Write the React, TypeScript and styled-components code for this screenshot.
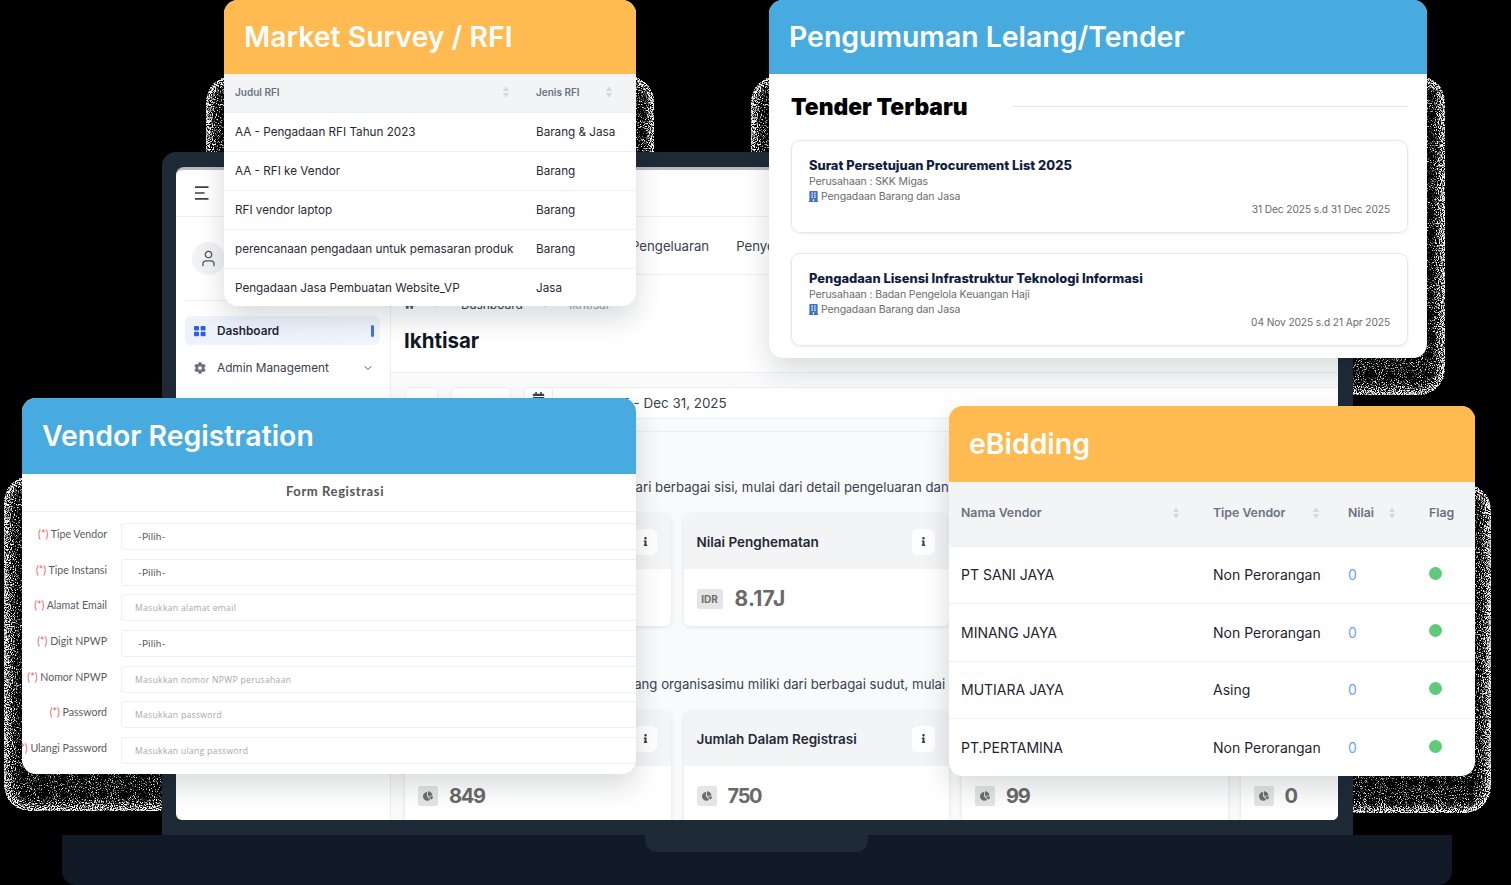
import React from 'react';
import styled, { createGlobalStyle } from 'styled-components';
import { ChevronDown, ChevronRight, User } from 'lucide-react';
import { FaBuilding, FaCalendarAlt, FaChartPie, FaCog, FaHome, FaInfo } from 'react-icons/fa';

const GlobalStyle = createGlobalStyle`
  html, body {
    margin: 0;
    padding: 0;
    background: #000;
  }
  * {
    box-sizing: border-box;
  }
`;

const ORANGE = '#ffba51';
const BLUE = '#47abe0';

const Stage = styled.div`
  position: relative;
  width: 1511px;
  height: 885px;
  padding-top: 152px;
  overflow: hidden;
  background: #000;
  font-family: Inter, 'Liberation Sans', sans-serif;
  color: #111827;
`;

/* leftover of the exported shadow: a speckled rim around each floating card */
const Rim = styled.div<{ $left: number; $top: number; $width: number; $height: number }>`
  position: absolute;
  left: ${p => p.$left}px;
  top: ${p => p.$top}px;
  width: ${p => p.$width}px;
  height: ${p => p.$height}px;
  border-radius: 26px;
  background: #626262;
  box-shadow: inset 0 0 12px 4px #fff;
  filter: url(#speckle);
`;

const Frame = styled.div`
  position: relative;
  width: 1191px;
  height: 683px;
  margin-left: 162px;
  padding: 15px 15px 15px 14px;
  background: #1e2a36;
  border-radius: 14px 14px 0 0;
`;

const Screen = styled.div`
  display: grid;
  grid-template-columns: 215px 1fr;
  height: 100%;
  background: #fff;
  border-top: 3px solid #b9bcbf;
  border-radius: 8px 8px 6px 6px;
  overflow: hidden;
`;

const Sidebar = styled.aside`
  display: flex;
  flex-direction: column;
  border-right: 1px solid #eceef1;
`;

const SideTop = styled.div`
  display: flex;
  align-items: center;
  height: 47px;
  padding-left: 18px;
  border-bottom: 1px solid #eceef1;
`;

const Profile = styled.div`
  display: flex;
  align-items: center;
  height: 84px;
  margin: 0 9px 0 9px;
  padding-left: 7px;
  border-bottom: 1px solid #eceef1;
`;

const Avatar = styled.div`
  display: flex;
  align-items: center;
  justify-content: center;
  width: 33px;
  height: 33px;
  border-radius: 50%;
  background: #f1f2f4;
  color: #4b5563;
`;

const Nav = styled.nav`
  display: flex;
  flex-direction: column;
  gap: 8px;
  padding: 15px 10px 0 9px;
`;

const NavItem = styled.div<{ $active?: boolean }>`
  position: relative;
  display: flex;
  align-items: center;
  gap: 11px;
  height: 29px;
  padding: 0 6px 0 9px;
  border-radius: 6px;
  font-size: 11.8px;
  font-weight: ${p => (p.$active ? 600 : 400)};
  color: ${p => (p.$active ? '#1f2937' : '#374151')};
  background: ${p => (p.$active ? 'linear-gradient(90deg, #edf2fb, #f0f5fe)' : 'transparent')};
`;

const NavLabel = styled.span`
  flex: 1;
`;

const ActiveMark = styled.span`
  width: 3px;
  height: 12px;
  border-radius: 2px;
  background: #3b76ee;
`;

const Main = styled.main`
  display: flex;
  flex-direction: column;
  min-width: 0;
`;

const TopBar = styled.div`
  height: 47px;
  border-bottom: 1px solid #eceef1;
`;

const Tabs = styled.div`
  display: flex;
  align-items: center;
  gap: 27px;
  height: 58px;
  padding-left: 240px;
  border-bottom: 1px solid #eceef1;
  font-size: 13.2px;
  color: #374151;
  white-space: nowrap;
`;

const PageHead = styled.div`
  height: 98px;
  padding: 20px 14px 0 13px;
  border-bottom: 1px solid #eceef1;
`;

const Crumbs = styled.div`
  display: flex;
  align-items: center;
  gap: 18px;
  height: 18px;
  font-size: 12px;
  color: #374151;
`;

const CrumbMuted = styled.span`
  color: #9ca3af;
`;

const PageTitle = styled.h1`
  margin: 15px 0 0;
  font-size: 20.5px;
  line-height: 26px;
  font-weight: 700;
  color: #111827;
`;

const Content = styled.div`
  flex: 1;
  min-height: 0;
  background: #f9fafb;
`;

const Toolbar = styled.div`
  display: flex;
  gap: 13px;
  height: 59px;
  padding: 14px 0 0 14px;
  border-bottom: 1px solid #eceef1;
`;

const ToolBox = styled.div<{ $width: number }>`
  width: ${p => p.$width}px;
  height: 32px;
  background: #fff;
  border: 1px solid #eceef1;
  border-radius: 4px;
`;

const DateGroup = styled.div`
  flex: 1;
  display: flex;
  height: 32px;
  background: #fff;
  border: 1px solid #eceef1;
  border-right: 0;
  border-radius: 4px 0 0 4px;
  font-size: 13.4px;
  color: #374151;
`;

const DateIcon = styled.div`
  display: flex;
  justify-content: center;
  width: 28px;
  padding-top: 4px;
  border-right: 1px solid #eceef1;
  color: #374151;
`;

const DateText = styled.div`
  padding-left: 4px;
  line-height: 31px;
  white-space: nowrap;
`;

const Section = styled.section<{ $top: number }>`
  padding: ${p => p.$top}px 0 0 14px;
`;

const SectionText = styled.p<{ $nudge: number }>`
  margin: 0 0 18px ${p => p.$nudge}px;
  height: 17px;
  font-size: 13.2px;
  line-height: 17px;
  color: #374151;
  white-space: nowrap;
`;

const CardRow = styled.div`
  display: grid;
  grid-template-columns: repeat(4, 265.5px);
  column-gap: 13px;
`;

const StatCard = styled.div<{ $height: number }>`
  height: ${p => p.$height}px;
  background: #fff;
  border-radius: 6px;
  box-shadow: 0 1px 4px rgba(17, 24, 39, 0.1);
  overflow: hidden;
`;

const StatHead = styled.div`
  display: flex;
  align-items: center;
  justify-content: space-between;
  height: 55px;
  padding: 0 14px 0 13px;
  background: #f3f4f6;
  font-size: 13.5px;
  font-weight: 600;
  color: #1f2937;
`;

const InfoButton = styled.div`
  display: flex;
  align-items: center;
  justify-content: center;
  width: 23px;
  height: 26px;
  background: #fff;
  border-radius: 6px;
  color: #374151;
`;

const StatBody = styled.div<{ $tight?: boolean }>`
  display: flex;
  align-items: center;
  gap: ${p => (p.$tight ? '11px' : '12px')};
  padding: 18px 14px 0 13px;
  font-size: ${p => (p.$tight ? '20px' : '21px')};
  font-weight: 700;
  line-height: 24px;
  letter-spacing: ${p => (p.$tight ? '-1.3px' : '0.2px')};
  color: #696969;
`;

const Badge = styled.div<{ $width: number }>`
  display: flex;
  align-items: center;
  justify-content: center;
  width: ${p => p.$width}px;
  height: 20px;
  background: #e5e5e5;
  border-radius: 2px;
  font-size: 10px;
  font-weight: 700;
  letter-spacing: 0;
  color: #6e6e6e;
`;

const Base = styled.div`
  position: relative;
  width: 1390px;
  height: 50px;
  margin-left: 62px;
  background: #121926;
  border-radius: 0 0 14px 14px;
`;

const Notch = styled.div`
  position: absolute;
  left: 583px;
  top: 0;
  width: 223px;
  height: 17px;
  background: #1e2a36;
  border-radius: 0 0 12px 12px;
`;

const Float = styled.div<{ $left: number; $top: number; $width: number; $height: number }>`
  position: absolute;
  left: ${p => p.$left}px;
  top: ${p => p.$top}px;
  width: ${p => p.$width}px;
  height: ${p => p.$height}px;
  display: flex;
  flex-direction: column;
  background: #fff;
  border-radius: 14px;
  box-shadow: 0 12px 28px rgba(17, 24, 39, 0.16);
  overflow: hidden;
`;

const FloatHead = styled.div<{ $color: string; $height: number }>`
  flex: none;
  display: flex;
  align-items: center;
  height: ${p => p.$height}px;
  padding: 0 0 2px 20px;
  background: ${p => p.$color};
  font-size: 28.4px;
  font-weight: 600;
  color: #fff;
  white-space: nowrap;
`;

const Table = styled.table`
  width: 100%;
  border-collapse: collapse;
  table-layout: fixed;
`;

const HeadCellInner = styled.div<{ $pad: number }>`
  display: flex;
  align-items: center;
  justify-content: space-between;
  padding-right: ${p => p.$pad}px;
`;

const SmallTh = styled.th`
  height: 38px;
  padding: 0 0 2px 11px;
  background: #f3f4f6;
  font-size: 10px;
  font-weight: 600;
  text-align: left;
  color: #6b7280;
`;

const SmallTd = styled.td`
  height: 39px;
  padding: 0 0 0 11px;
  border-top: 1px solid #f0f1f3;
  font-size: 11.7px;
  color: #272b36;
  white-space: nowrap;
`;

const BigTh = styled.th`
  height: 64px;
  padding: 0 0 2px 12px;
  background: #f3f4f6;
  border-bottom: 1px solid #eceef1;
  font-size: 12.3px;
  font-weight: 600;
  text-align: left;
  color: #6b7280;
`;

const BigTd = styled.td`
  height: 57.5px;
  padding: 0 0 0 12px;
  border-top: 1px solid #eff0f2;
  font-size: 14px;
  color: #1f2430;
  white-space: nowrap;
`;

const ZeroLink = styled.span`
  color: #6da5f7;
`;

const Dot = styled.span`
  display: block;
  width: 13px;
  height: 13px;
  margin: 0 0 3px 0;
  border-radius: 50%;
  background: #5fca7a;
`;

const TenderBody = styled.div`
  flex: 1;
  padding: 18px 19px 0 22px;
`;

const TenderHeading = styled.div`
  display: flex;
  align-items: center;
  gap: 44px;
  height: 28px;
  margin-bottom: 20px;
  font-size: 22.8px;
  font-weight: 900;
  color: #000;
`;

const HeadingRule = styled.span`
  flex: 1;
  height: 1px;
  background: #e5e7eb;
`;

const TenderList = styled.div`
  display: flex;
  flex-direction: column;
  gap: 20px;
`;

const TenderCard = styled.div`
  position: relative;
  height: 93px;
  padding: 17px 17px 0;
  border: 1px solid #e5e7eb;
  border-radius: 9px;
  box-shadow: 0 1px 3px rgba(17, 24, 39, 0.08);
`;

const TenderTitle = styled.div`
  font-size: 12.9px;
  line-height: 16px;
  font-weight: 800;
  color: #121d42;
`;

const TenderMeta = styled.div`
  display: flex;
  align-items: center;
  gap: 2px;
  height: 15px;
  font-size: 10.5px;
  color: #6b6b6b;
  letter-spacing: -0.1px;
`;

const BuildingMark = styled.span`
  display: flex;
  margin-left: -1px;
  color: #3f6fc4;
`;

const TenderDate = styled.div`
  margin-top: -1px;
  font-size: 10.2px;
  line-height: 12px;
  text-align: right;
  color: #6b6b6b;
  letter-spacing: -0.1px;
`;

const FormTitle = styled.div`
  flex: none;
  height: 38px;
  padding-left: 12px;
  border-bottom: 1px solid #f0f1f3;
  font-family: Lato, 'Open Sans', sans-serif;
  font-size: 13px;
  font-weight: 700;
  line-height: 34px;
  letter-spacing: 0.6px;
  text-align: center;
  color: #555;
`;

const FormBody = styled.div`
  display: flex;
  flex-direction: column;
  gap: 8.7px;
  padding-top: 11px;
`;

const FormRow = styled.div`
  display: grid;
  grid-template-columns: 85px 1fr;
  column-gap: 14px;
`;

const FieldLabel = styled.div`
  padding-top: 4px;
  font-family: Lato, 'Open Sans', sans-serif;
  font-size: 10.6px;
  line-height: 14px;
  text-align: right;
  color: #5c5c5c;
  white-space: nowrap;
  direction: rtl;
`;

const Required = styled.span`
  color: #f05a5a;
`;

const FieldBox = styled.div<{ $select?: boolean }>`
  height: 27px;
  padding-left: ${p => (p.$select ? '16px' : '13px')};
  border: 1px solid #eff0f2;
  border-right: 0;
  border-radius: 3px 0 0 3px;
  font-family: ${p => (p.$select ? "Lato, 'Open Sans', sans-serif" : "'Open Sans', sans-serif")};
  font-size: ${p => (p.$select ? '10px' : '8.6px')};
  line-height: ${p => (p.$select ? '25px' : '27px')};
  letter-spacing: ${p => (p.$select ? '0.2px' : '0.3px')};
  color: ${p => (p.$select ? '#5c5c5c' : '#a8a8a8')};
`;

const SortArrows: React.FC = () => (
  <svg width="8" height="12" viewBox="0 0 8 12" fill="#d5d8dd" aria-hidden="true">
    <path d="M4 0.5 7.2 5H0.8ZM4 11.5 0.8 7H7.2Z" />
  </svg>
);

const DashboardMark: React.FC = () => (
  <svg width="12" height="12" viewBox="0 0 12 12" fill="#2f5fe0" aria-hidden="true">
    <rect x="0" y="1" width="5" height="4.4" rx="1" />
    <rect x="6.6" y="1" width="5" height="4.4" rx="1" />
    <rect x="0" y="6.8" width="5" height="4.4" rx="1" />
    <rect x="6.6" y="6.8" width="5" height="4.4" rx="1" />
  </svg>
);

const MenuMark: React.FC = () => (
  <svg width="16" height="14" viewBox="0 0 16 14" fill="none" stroke="#374151" strokeWidth="1.7" aria-hidden="true">
    <path d="M1 1.2H14.5M1 7H10.5M1 12.8H14.5" />
  </svg>
);

const rfiRows = [
  ['AA - Pengadaan RFI Tahun 2023', 'Barang & Jasa'],
  ['AA - RFI ke Vendor', 'Barang'],
  ['RFI vendor laptop', 'Barang'],
  ['perencanaan pengadaan untuk pemasaran produk', 'Barang'],
  ['Pengadaan Jasa Pembuatan Website_VP', 'Jasa'],
];

const vendorRows = [
  ['PT SANI JAYA', 'Non Perorangan'],
  ['MINANG JAYA', 'Non Perorangan'],
  ['MUTIARA JAYA', 'Asing'],
  ['PT.PERTAMINA', 'Non Perorangan'],
];

const tenders = [
  {
    title: 'Surat Persetujuan Procurement List 2025',
    company: 'Perusahaan : SKK Migas',
    period: '31 Dec 2025 s.d 31 Dec 2025',
  },
  {
    title: 'Pengadaan Lisensi Infrastruktur Teknologi Informasi',
    company: 'Perusahaan : Badan Pengelola Keuangan Haji',
    period: '04 Nov 2025 s.d 21 Apr 2025',
  },
];

const fields = [
  { label: 'Tipe Vendor', value: '-Pilih-', select: true },
  { label: 'Tipe Instansi', value: '-Pilih-', select: true },
  { label: 'Alamat Email', value: 'Masukkan alamat email' },
  { label: 'Digit NPWP', value: '-Pilih-', select: true },
  { label: 'Nomor NPWP', value: 'Masukkan nomor NPWP perusahaan' },
  { label: 'Password', value: 'Masukkan password' },
  { label: 'Ulangi Password', value: 'Masukkan ulang password' },
];

const spendCards = [
  { title: 'Nilai Pengeluaran', value: '12.4J' },
  { title: 'Nilai Penghematan', value: '8.17J' },
];

const vendorCards = [
  { title: 'Jumlah Vendor', value: '849' },
  { title: 'Jumlah Dalam Registrasi', value: '750' },
  { title: '', value: '99' },
  { title: '', value: '0' },
];

const App: React.FC = () => {
  return (
    <Stage>
      <GlobalStyle />
      <svg width="0" height="0" style={{ position: 'absolute' }} aria-hidden="true">
        <filter id="speckle" x="0" y="0" width="1" height="1" colorInterpolationFilters="sRGB">
          <feTurbulence type="fractalNoise" baseFrequency="0.95" numOctaves="2" seed="4" result="grain" />
          <feColorMatrix
            in="grain"
            type="matrix"
            values="2.2 0 0 0 -0.6  2.2 0 0 0 -0.6  2.2 0 0 0 -0.6  0 0 0 0 1"
            result="flat"
          />
          <feComposite in="SourceGraphic" in2="flat" operator="arithmetic" k1="0" k2="1" k3="1" k4="-1" result="mix" />
          <feComponentTransfer in="mix">
            <feFuncR type="linear" slope="2.4" />
            <feFuncG type="linear" slope="2.4" />
            <feFuncB type="linear" slope="2.4" />
          </feComponentTransfer>
        </filter>
      </svg>

      <Rim $left={206} $top={76} $width={448} $height={267} />
      <Rim $left={751} $top={76} $width={694} $height={319} />
      <Rim $left={4} $top={476} $width={650} $height={335} />
      <Rim $left={931} $top={484} $width={560} $height={329} />

      <Frame>
        <Screen>
          <Sidebar>
            <SideTop>
              <MenuMark />
            </SideTop>
            <Profile>
              <Avatar>
                <User size={19} strokeWidth={1.6} />
              </Avatar>
            </Profile>
            <Nav>
              <NavItem $active>
                <DashboardMark />
                <NavLabel>Dashboard</NavLabel>
                <ActiveMark />
              </NavItem>
              <NavItem>
                <FaCog size={12} color="#6b7280" />
                <NavLabel>Admin Management</NavLabel>
                <ChevronDown size={12} color="#4b5563" />
              </NavItem>
            </Nav>
          </Sidebar>
          <Main>
            <TopBar />
            <Tabs>
              <span>Pengeluaran</span>
              <span>Penyedia</span>
            </Tabs>
            <PageHead>
              <Crumbs>
                <FaHome size={11} color="#4b5563" />
                <ChevronRight size={10} color="#9ca3af" />
                <span>Dashboard</span>
                <ChevronRight size={10} color="#9ca3af" />
                <CrumbMuted>Ikhtisar</CrumbMuted>
              </Crumbs>
              <PageTitle>Ikhtisar</PageTitle>
            </PageHead>
            <Content>
              <Toolbar>
                <ToolBox $width={33} />
                <ToolBox $width={60} />
                <DateGroup>
                  <DateIcon>
                    <FaCalendarAlt size={13} />
                  </DateIcon>
                  <DateText>Jan 1, 2025 - Dec 31, 2025</DateText>
                </DateGroup>
              </Toolbar>
              <Section $top={47}>
                <SectionText $nudge={5}>
                  Melihat pengeluaran organisasimu dari berbagai sisi, mulai dari detail pengeluaran dan
                </SectionText>
                <CardRow>
                  {spendCards.map(card => (
                    <StatCard key={card.title} $height={112}>
                      <StatHead>
                        {card.title}
                        <InfoButton>
                          <FaInfo size={9} />
                        </InfoButton>
                      </StatHead>
                      <StatBody>
                        <Badge $width={26}>IDR</Badge>
                        {card.value}
                      </StatBody>
                    </StatCard>
                  ))}
                </CardRow>
              </Section>
              <Section $top={50}>
                <SectionText $nudge={0}>
                  Melihat jumlah seluruh vendor aktif yang organisasimu miliki dari berbagai sudut, mulai
                </SectionText>
                <CardRow>
                  {vendorCards.map(card => (
                    <StatCard key={card.value} $height={130}>
                      <StatHead>
                        {card.title}
                        <InfoButton>
                          <FaInfo size={9} />
                        </InfoButton>
                      </StatHead>
                      <StatBody $tight>
                        <Badge $width={20}>
                          <FaChartPie size={10} />
                        </Badge>
                        {card.value}
                      </StatBody>
                    </StatCard>
                  ))}
                </CardRow>
              </Section>
            </Content>
          </Main>
        </Screen>
      </Frame>
      <Base>
        <Notch />
      </Base>

      <Float $left={224} $top={0} $width={412} $height={306}>
        <FloatHead $color={ORANGE} $height={74}>
          Market Survey / RFI
        </FloatHead>
        <Table>
          <colgroup>
            <col width={301} />
            <col width={111} />
          </colgroup>
          <thead>
            <tr>
              <SmallTh>
                <HeadCellInner $pad={15}>
                  Judul RFI
                  <SortArrows />
                </HeadCellInner>
              </SmallTh>
              <SmallTh>
                <HeadCellInner $pad={23}>
                  Jenis RFI
                  <SortArrows />
                </HeadCellInner>
              </SmallTh>
            </tr>
          </thead>
          <tbody>
            {rfiRows.map(([title, kind]) => (
              <tr key={title}>
                <SmallTd>{title}</SmallTd>
                <SmallTd>{kind}</SmallTd>
              </tr>
            ))}
          </tbody>
        </Table>
      </Float>

      <Float $left={769} $top={0} $width={658} $height={358}>
        <FloatHead $color={BLUE} $height={74}>
          Pengumuman Lelang/Tender
        </FloatHead>
        <TenderBody>
          <TenderHeading>
            Tender Terbaru
            <HeadingRule />
          </TenderHeading>
          <TenderList>
            {tenders.map(tender => (
              <TenderCard key={tender.title}>
                <TenderTitle>{tender.title}</TenderTitle>
                <TenderMeta>{tender.company}</TenderMeta>
                <TenderMeta>
                  <BuildingMark>
                    <FaBuilding size={11} />
                  </BuildingMark>
                  Pengadaan Barang dan Jasa
                </TenderMeta>
                <TenderDate>{tender.period}</TenderDate>
              </TenderCard>
            ))}
          </TenderList>
        </TenderBody>
      </Float>

      <Float $left={22} $top={398} $width={614} $height={376}>
        <FloatHead $color={BLUE} $height={76}>
          Vendor Registration
        </FloatHead>
        <FormTitle>Form Registrasi</FormTitle>
        <FormBody>
          {fields.map(field => (
            <FormRow key={field.label}>
              <FieldLabel>
                <bdi>
                  <Required>(*)</Required> {field.label}
                </bdi>
              </FieldLabel>
              <FieldBox $select={field.select}>{field.value}</FieldBox>
            </FormRow>
          ))}
        </FormBody>
      </Float>

      <Float $left={949} $top={406} $width={526} $height={370}>
        <FloatHead $color={ORANGE} $height={76}>
          eBidding
        </FloatHead>
        <Table>
          <colgroup>
            <col width={252} />
            <col width={135} />
            <col width={81} />
            <col width={58} />
          </colgroup>
          <thead>
            <tr>
              <BigTh>
                <HeadCellInner $pad={21}>
                  Nama Vendor
                  <SortArrows />
                </HeadCellInner>
              </BigTh>
              <BigTh>
                <HeadCellInner $pad={16}>
                  Tipe Vendor
                  <SortArrows />
                </HeadCellInner>
              </BigTh>
              <BigTh>
                <HeadCellInner $pad={21}>
                  Nilai
                  <SortArrows />
                </HeadCellInner>
              </BigTh>
              <BigTh>Flag</BigTh>
            </tr>
          </thead>
          <tbody>
            {vendorRows.map(([name, type]) => (
              <tr key={name}>
                <BigTd>{name}</BigTd>
                <BigTd>{type}</BigTd>
                <BigTd>
                  <ZeroLink>0</ZeroLink>
                </BigTd>
                <BigTd>
                  <Dot />
                </BigTd>
              </tr>
            ))}
          </tbody>
        </Table>
      </Float>
    </Stage>
  );
};

export default App;
